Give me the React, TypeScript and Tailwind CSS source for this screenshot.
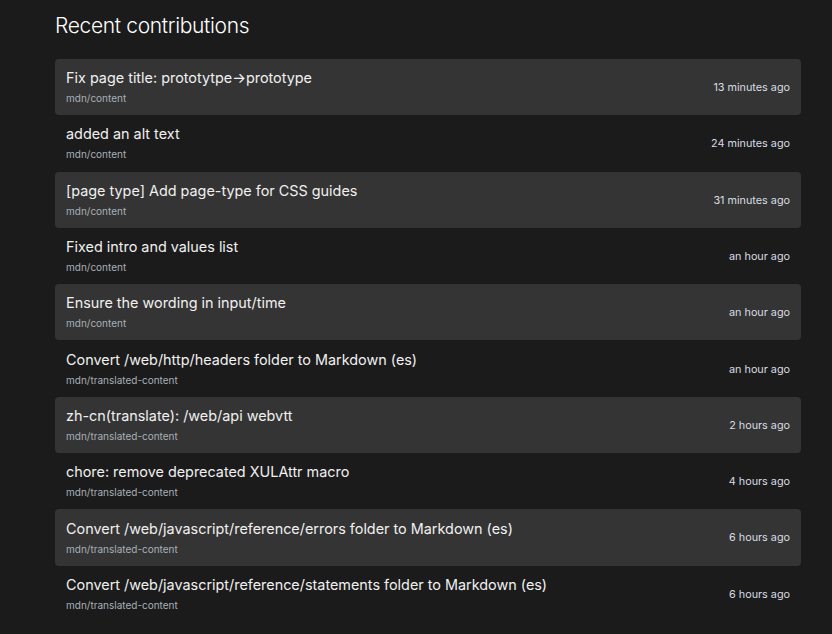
const items = [
  { title: "Fix page title: prototytpe→prototype", repo: "mdn/content", time: "13 minutes ago" },
  { title: "added an alt text", repo: "mdn/content", time: "24 minutes ago" },
  { title: "[page type] Add page-type for CSS guides", repo: "mdn/content", time: "31 minutes ago" },
  { title: "Fixed intro and values list", repo: "mdn/content", time: "an hour ago" },
  { title: "Ensure the wording in input/time", repo: "mdn/content", time: "an hour ago" },
  { title: "Convert /web/http/headers folder to Markdown (es)", repo: "mdn/translated-content", time: "an hour ago" },
  { title: "zh-cn(translate): /web/api webvtt", repo: "mdn/translated-content", time: "2 hours ago" },
  { title: "chore: remove deprecated XULAttr macro", repo: "mdn/translated-content", time: "4 hours ago" },
  { title: "Convert /web/javascript/reference/errors folder to Markdown (es)", repo: "mdn/translated-content", time: "6 hours ago" },
  { title: "Convert /web/javascript/reference/statements folder to Markdown (es)", repo: "mdn/translated-content", time: "6 hours ago" },
];

export default function App() {
  return (
    <div
      className="min-h-screen bg-[#1b1b1b] text-white"
      style={{ fontFamily: "Inter, 'Liberation Sans', sans-serif" }}
    >
      <div className="ml-[55px] w-[746px] pt-[11px]">
        <h2 className="text-[21px] leading-[30px] font-light tracking-[-0.016em] text-white mb-[18px]">
          Recent contributions
        </h2>
        <ul>
          {items.map((it, i) => (
            <li
              key={i}
              className={`flex items-center justify-between rounded px-[11px] h-[56.3px] ${
                i % 2 === 0 ? "bg-[#343434]" : ""
              }`}
            >
              <div className="flex flex-col">
                <span className="text-[14.4px] leading-[20px] text-[#f0f0f0]">{it.title}</span>
                <span className="text-[10px] leading-[16px] mt-[2px] text-[#a8b0b8]">{it.repo}</span>
              </div>
              <span className="text-[10.8px] pt-[2px] text-[#d8dde2]">{it.time}</span>
            </li>
          ))}
        </ul>
      </div>
    </div>
  );
}
